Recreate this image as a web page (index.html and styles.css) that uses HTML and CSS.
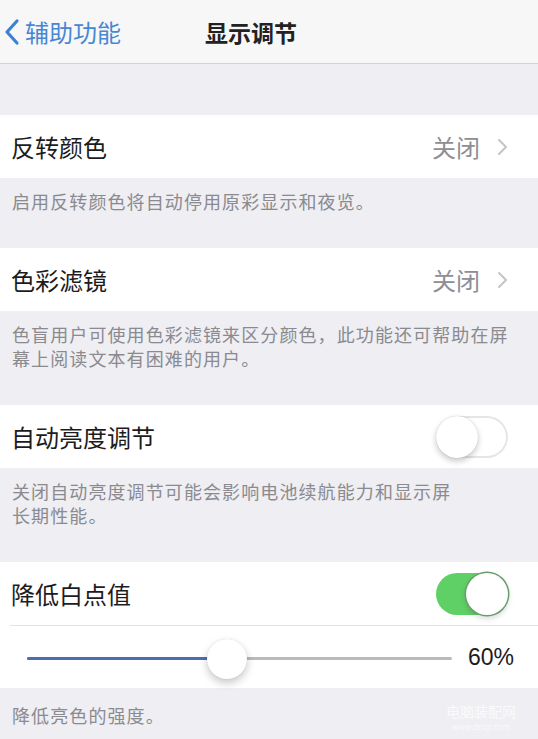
FILE: index.html
```html
<!DOCTYPE html>
<html lang="zh-CN">
<head>
    <meta charset="UTF-8">
    <meta name="viewport" content="width=device-width, initial-scale=1.0">
    <title>显示调节</title>
    <link rel="stylesheet" href="styles.css">
</head>
<body>
    <div class="nav">
        <a class="back" href="#">
            <svg class="back-icon" width="18" height="28" viewBox="0 0 18 28">
                <polyline points="14,3 4,14 14,25" fill="none" stroke="#3f80d2" stroke-width="3.2" stroke-linecap="round" stroke-linejoin="round"/>
            </svg>
            <span>辅助功能</span>
        </a>
        <div class="title">显示调节</div>
    </div>

    <div class="spacer"></div>

    <div class="group">
        <div class="cell">
            <span class="label">反转颜色</span>
            <span class="detail">关闭
                <svg class="chevron" width="12" height="18" viewBox="0 0 12 18">
                    <polyline points="3,2 10,9 3,16" fill="none" stroke="#c4c4c9" stroke-width="2" stroke-linecap="round" stroke-linejoin="round"/>
                </svg>
            </span>
        </div>
    </div>
    <p class="footer">启用反转颜色将自动停用原彩显示和夜览。</p>

    <div class="group">
        <div class="cell">
            <span class="label">色彩滤镜</span>
            <span class="detail">关闭
                <svg class="chevron" width="12" height="18" viewBox="0 0 12 18">
                    <polyline points="3,2 10,9 3,16" fill="none" stroke="#c4c4c9" stroke-width="2" stroke-linecap="round" stroke-linejoin="round"/>
                </svg>
            </span>
        </div>
    </div>
    <p class="footer">色盲用户可使用色彩滤镜来区分颜色，此功能还可帮助在屏<br>幕上阅读文本有困难的用户。</p>

    <div class="group">
        <div class="cell">
            <span class="label">自动亮度调节</span>
            <span class="toggle"><span class="knob"></span></span>
        </div>
    </div>
    <p class="footer">关闭自动亮度调节可能会影响电池续航能力和显示屏<br>长期性能。</p>

    <div class="group">
        <div class="cell cell-divided">
            <span class="label">降低白点值</span>
            <span class="toggle on"><span class="knob"></span></span>
        </div>
        <div class="slider-row">
            <div class="track">
                <div class="fill" style="width: 47%"></div>
                <div class="thumb" style="left: 47%"></div>
            </div>
            <span class="value">60%</span>
        </div>
    </div>
    <div class="footer footer-last">
        <span>降低亮色的强度。</span>
        <span class="watermark">
            <span>电脑装配网</span>
            <span class="watermark-url">www.dnzp.com</span>
        </span>
    </div>
</body>
</html>
```

FILE: styles.css
```css
body {
    margin: 0;
    background-color: #eeeef3;
    font-family: 'Noto Sans CJK SC', 'Noto Sans', sans-serif;
    color: #1c1c1e;
    overflow: hidden;
}

.nav {
    display: flex;
    align-items: center;
    height: 63px;
    background-color: #f7f7f8;
    border-bottom: 1px solid #d3d3d8;
}

.back {
    display: flex;
    align-items: center;
    gap: 4px;
    padding-left: 3px;
    color: #4787d2;
    font-size: 24px;
    text-decoration: none;
}

.back-icon {
    display: block;
}

.title {
    margin-left: 84px;
    font-size: 23px;
    font-weight: 600;
    color: #222;
}

.spacer {
    height: 51px;
}

.group {
    background-color: #fff;
}

.cell {
    display: flex;
    align-items: center;
    justify-content: space-between;
    height: 63px;
    padding: 0 30px 0 11px;
}

.cell-divided {
    border-bottom: 1px solid #e2e2e6;
    margin-left: 10px;
    padding-left: 1px;
}

.label {
    font-size: 24px;
    color: #1c1c1e;
}

.detail {
    display: flex;
    align-items: center;
    gap: 16px;
    font-size: 24px;
    color: #8e8e93;
}

.chevron {
    display: block;
}

.toggle {
    position: relative;
    width: 72px;
    height: 42px;
    border-radius: 22px;
    background-color: #fff;
    box-shadow: inset 0 0 0 2px #e6e6ea;
}

.toggle .knob {
    position: absolute;
    top: 0;
    left: 0;
    width: 42px;
    height: 42px;
    border-radius: 50%;
    background-color: #fff;
    box-shadow: 0 3px 6px rgba(0, 0, 0, 0.22), 0 0 1px rgba(0, 0, 0, 0.2);
}

.toggle.on {
    background-color: #5fd065;
    box-shadow: none;
}

.toggle.on .knob {
    left: auto;
    right: 0;
    box-shadow: 0 0 0 1.5px #6a9d6c, 0 3px 6px rgba(0, 0, 0, 0.18);
}

.slider-row {
    display: flex;
    align-items: center;
    height: 62px;
    padding-left: 27px;
}

.track {
    position: relative;
    width: 425px;
    height: 3px;
    margin-top: 3px;
    background-color: #b9b9be;
    border-radius: 2px;
}

.fill {
    height: 100%;
    background-color: #4a6db6;
    border-radius: 2px;
}

.thumb {
    position: absolute;
    top: 50%;
    width: 40px;
    height: 40px;
    margin: -20px 0 0 -20px;
    border-radius: 50%;
    background-color: #fff;
    box-shadow: 0 4px 8px rgba(0, 0, 0, 0.22), 0 0 1px rgba(0, 0, 0, 0.15);
}

.value {
    margin-left: 16px;
    font-family: 'Liberation Sans', 'Noto Sans', sans-serif;
    font-size: 23px;
    color: #1c1c1e;
}

.footer {
    margin: 0;
    padding: 11px 12px 35px;
    font-size: 18px;
    line-height: 24px;
    letter-spacing: 1.1px;
    color: #8a8a8f;
}

.footer-last {
    display: flex;
    justify-content: space-between;
    align-items: flex-start;
    padding-top: 15px;
    padding-right: 22px;
}

.watermark {
    display: flex;
    flex-direction: column;
    align-items: center;
    gap: 3px;
    font-size: 14px;
    line-height: 16px;
    letter-spacing: 0;
    color: rgba(255, 255, 255, 0.75);
}

.watermark-url {
    font-size: 8px;
    line-height: 10px;
}
```
